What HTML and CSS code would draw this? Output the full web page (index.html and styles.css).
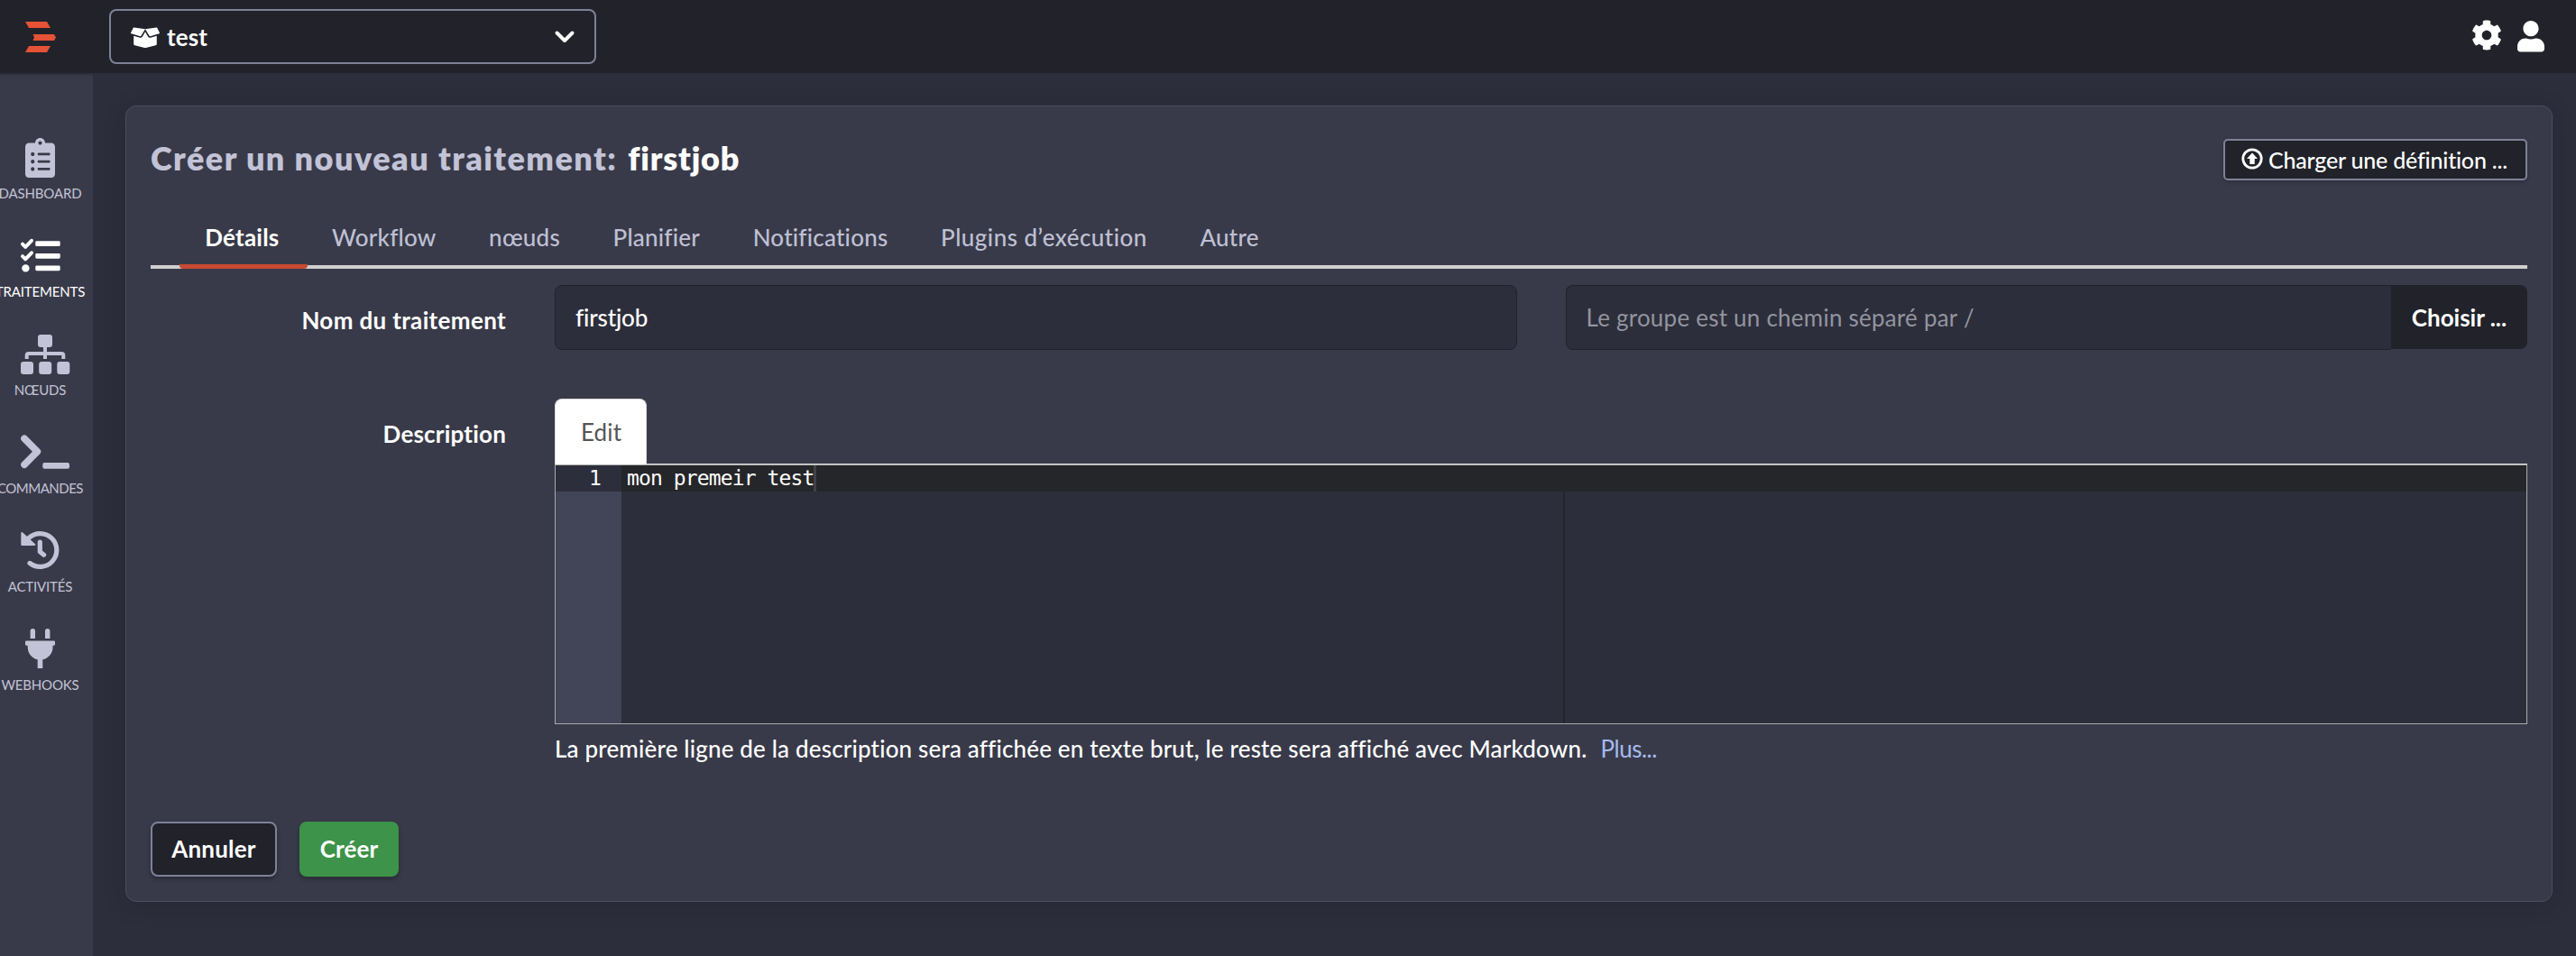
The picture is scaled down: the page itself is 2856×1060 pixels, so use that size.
FILE: index.html
```html
<!DOCTYPE html>
<html lang="fr">
<head>
<meta charset="utf-8">
<title>Créer un nouveau traitement</title>
<link rel="stylesheet" href="styles.css">
</head>
<body>
<header class="topbar">
  <svg class="logo" viewBox="0 0 34 34"><path d="M0 0h24l4 7H4zM8.500 14H32l2 3.500-2 3.500H8.500l1.500-3.500zM4 27h24l-4 7H0z"/></svg>
  <div class="project">
    <svg class="box" viewBox="0 0 640 512"><path d="M425.700 256c-16.900 0-32.800-9-41.400-23.400L320 126l-64.200 106.600c-8.700 14.500-24.600 23.500-41.500 23.500-4.500 0-9-.6-13.300-1.900L64 215v178c0 14.700 10 27.500 24.200 31l216.200 54.100c10.200 2.500 20.900 2.500 31 0L551.800 424c14.200-3.600 24.200-16.400 24.200-31V215l-137 39.100c-4.300 1.300-8.800 1.900-13.300 1.900zm212.600-112.200L586.800 41c-3.100-6.200-9.800-9.800-16.700-8.900L320 64l91.700 152.100c3.800 6.300 11.400 9.300 18.500 7.300l197.900-56.500c9.900-2.900 14.700-13.900 10.200-23.100zM53.200 41L1.700 143.800c-4.600 9.200.3 20.200 10.100 23l197.900 56.500c7.100 2 14.700-1 18.500-7.300L320 64 69.800 32.100c-6.900-.8-13.500 2.700-16.600 8.900z"/></svg>
    <span>test</span>
    <svg class="chevron" viewBox="0 0 22 14"><path d="M2.500 2.500 11 11l8.500-8.500"/></svg>
  </div>
  <div class="tools">
    <svg class="cog" viewBox="0 0 512 512"><path d="M487.400 315.700l-42.600-24.600c4.300-23.200 4.300-47 0-70.200l42.600-24.600c4.900-2.800 7.100-8.600 5.500-14-11.100-35.600-30-67.800-54.700-94.600-3.800-4.100-10-5.100-14.800-2.300L380.800 110c-17.900-15.400-38.500-27.300-60.800-35.100V25.800c0-5.600-3.900-10.500-9.400-11.700-36.700-8.200-74.300-7.800-109.200 0-5.500 1.200-9.400 6.100-9.400 11.700V75c-22.200 7.900-42.800 19.800-60.800 35.100L88.700 85.500c-4.900-2.800-11-1.900-14.800 2.300-24.700 26.700-43.600 58.900-54.700 94.600-1.700 5.400.6 11.200 5.500 14L67.300 221c-4.300 23.200-4.300 47 0 70.200l-42.600 24.600c-4.900 2.800-7.100 8.600-5.500 14 11.100 35.600 30 67.800 54.700 94.600 3.800 4.100 10 5.100 14.800 2.300l42.600-24.600c17.900 15.400 38.500 27.300 60.800 35.100v49.200c0 5.600 3.900 10.500 9.400 11.700 36.700 8.200 74.300 7.800 109.200 0 5.500-1.200 9.400-6.100 9.400-11.700v-49.200c22.200-7.900 42.800-19.800 60.800-35.100l42.600 24.600c4.900 2.800 11 1.900 14.800-2.300 24.700-26.700 43.600-58.900 54.700-94.600 1.500-5.500-.7-11.300-5.600-14.100zM256 336c-44.100 0-80-35.900-80-80s35.900-80 80-80 80 35.900 80 80-35.900 80-80 80z"/></svg>
    <svg class="user" viewBox="0 0 448 512"><path d="M224 256c70.700 0 128-57.300 128-128S294.700 0 224 0 96 57.300 96 128s57.300 128 128 128zm89.600 32h-16.700c-22.200 10.200-46.900 16-72.900 16s-50.600-5.800-72.900-16h-16.700C60.200 288 0 348.200 0 422.400V464c0 26.500 21.500 48 48 48h352c26.500 0 48-21.500 48-48v-41.600c0-74.200-60.200-134.400-134.400-134.400z"/></svg>
  </div>
</header>
<div class="layout">
  <nav class="sidebar">
    <a class="nav-item">
      <svg class="narrow" viewBox="0 0 384 512"><path d="M336 64h-80c0-35.300-28.700-64-64-64s-64 28.700-64 64H48C21.500 64 0 85.500 0 112v352c0 26.500 21.500 48 48 48h288c26.500 0 48-21.500 48-48V112c0-26.500-21.500-48-48-48zM96 424c-13.300 0-24-10.700-24-24s10.700-24 24-24 24 10.700 24 24-10.700 24-24 24zm0-96c-13.300 0-24-10.700-24-24s10.700-24 24-24 24 10.700 24 24-10.700 24-24 24zm0-96c-13.300 0-24-10.700-24-24s10.700-24 24-24 24 10.700 24 24-10.700 24-24 24zm96-192c13.300 0 24 10.700 24 24s-10.700 24-24 24-24-10.700-24-24 10.700-24 24-24zm128 368c0 4.400-3.600 8-8 8H168c-4.400 0-8-3.600-8-8v-16c0-4.400 3.600-8 8-8h144c4.400 0 8 3.600 8 8v16zm0-96c0 4.400-3.600 8-8 8H168c-4.400 0-8-3.600-8-8v-16c0-4.400 3.600-8 8-8h144c4.400 0 8 3.600 8 8v16zm0-96c0 4.400-3.600 8-8 8H168c-4.400 0-8-3.600-8-8v-16c0-4.400 3.600-8 8-8h144c4.400 0 8 3.600 8 8v16z"/></svg>
      <span>DASHBOARD</span>
    </a>
    <a class="nav-item active">
      <svg class="regular" viewBox="0 0 44 44"><rect x="16.300" y="5.300" width="27.400" height="5.800" rx="1.400"/><rect x="16.300" y="18.900" width="27.400" height="5.800" rx="1.400"/><rect x="16.300" y="32.400" width="27.400" height="5.800" rx="1.400"/><circle cx="5.400" cy="35.400" r="4.200"/><path class="line" stroke-width="4" d="m2 8.600 3.200 3.200 6.800-7M2 22.100l3.200 3.200 6.800-7"/></svg>
      <span>TRAITEMENTS</span>
    </a>
    <a class="nav-item">
      <svg class="wide" viewBox="0 0 55 44"><rect x="19" width="16" height="14" rx="3"/><rect y="30" width="14" height="14" rx="3"/><rect x="20.200" y="30" width="14" height="14" rx="3"/><rect x="40.300" y="30" width="14" height="14" rx="3"/><path class="line butt" stroke-width="4" d="M6.700 27v-4q0-2 2-2h36.600q2 0 2 2v4M27 13v14"/></svg>
      <span>NŒUDS</span>
    </a>
    <a class="nav-item">
      <svg class="wide" viewBox="0 0 55 44"><path class="line" stroke-width="7.600" d="m4 6.200 14.400 14.500L4 35.200"/><rect x="24.300" y="33" width="29.700" height="6.800" rx="2"/></svg>
      <span class="tight">COMMANDES</span>
    </a>
    <a class="nav-item">
      <svg class="regular" viewBox="0 0 44 44"><path class="line" stroke-width="5.200" d="M8.800 7.600A18.400 18.400 0 1 1 10 35.400M21.300 12.200v10.600l4.300 3.400"/><path d="M.300 2Q.300.300 2 1.300L16 14.300q.8 1.700-1 1.700H1.500Q.300 16 .300 14.800z"/></svg>
      <span>ACTIVITÉS</span>
    </a>
    <a class="nav-item">
      <svg class="narrow" viewBox="0 0 33 44"><path d="M5.600 10V1.800a2.700 2.700 0 0 1 5.400 0V10zM22 10V1.800a2.700 2.700 0 0 1 5.400 0V10zM1.300 12.500h30.400q1.300 0 1.300 1.300v2.700q0 1.300-1.300 1.300h-1.200V19a14 14 0 0 1-11.200 14.300V43h-5.600v-9.700A14 14 0 0 1 2.700 19v-1.200H1.300Q0 17.800 0 16.500v-2.700q0-1.300 1.300-1.300z"/></svg>
      <span>WEBHOOKS</span>
    </a>
  </nav>
  <main class="content">
    <section class="card">
      <div class="card-head">
        <h1><span class="prefix">Créer un nouveau traitement:</span> <span class="job">firstjob</span></h1>
        <button class="load">
          <svg viewBox="0 0 24 24"><circle cx="12" cy="12" r="10.200"/><path d="M12 5.500 18 12h-3.300v6H9.300v-6H6z"/></svg>
          <span>Charger une définition ...</span>
        </button>
      </div>
      <ul class="tabs">
        <li class="active">Détails</li>
        <li>Workflow</li>
        <li>nœuds</li>
        <li>Planifier</li>
        <li>Notifications</li>
        <li class="plugins">Plugins d’exécution</li>
        <li>Autre</li>
      </ul>
      <div class="form-row">
        <label>Nom du traitement</label>
        <div class="fields">
          <div class="input">firstjob</div>
          <div class="group">
            <div class="input placeholder">Le groupe est un chemin séparé par /</div>
            <button class="choose">Choisir ...</button>
          </div>
        </div>
      </div>
      <div class="form-row description">
        <label>Description</label>
        <div>
          <div class="editor-tabs"><div class="editor-tab">Edit</div></div>
          <div class="editor">
            <div class="gutter"><div class="line-no">1</div></div>
            <div class="code">
              <div class="code-line">mon premeir test<i class="caret"></i></div>
              <div class="print-margin"></div>
            </div>
          </div>
          <p class="help">La première ligne de la description sera affichée en texte brut, le reste sera affiché avec Markdown.<a>Plus...</a></p>
        </div>
      </div>
      <div class="actions">
        <button class="cancel">Annuler</button>
        <button class="create">Créer</button>
      </div>
    </section>
  </main>
</div>
</body>
</html>
```
FILE: styles.css
```css
* { box-sizing: border-box; }
body {
  margin: 0;
  height: 1060px;
  overflow: hidden;
  display: flex;
  flex-direction: column;
  background: #2d2e3b;
  color: #fff;
  font: 500 26px/32px Lato, "Open Sans", sans-serif;
  letter-spacing: .15px;
}
svg { display: block; fill: currentColor; flex: none; overflow: visible; }
button { font: inherit; color: inherit; letter-spacing: inherit; margin: 0; border: 0; }
h1, p, ul { margin: 0; padding: 0; }

/* Top bar */
.topbar {
  height: 81px;
  flex: none;
  display: flex;
  align-items: flex-start;
  background: #21222a;
  padding: 10px 35px 0 28px;
}
.logo { width: 34px; height: 34px; margin: 14px 59px 0 0; color: #e65236; }
.project {
  width: 540px;
  height: 61px;
  border: 2px solid #7e8297;
  border-radius: 8px;
  padding: 13px 22px 0;
  display: flex;
  font-weight: 700;
}
.box { width: 32px; height: 25.600px; margin: 4px 8px 0 0; }
.chevron { width: 22px; height: 14px; margin: 8.500px 0 0 auto; }
.chevron path { fill: none; stroke: currentColor; stroke-width: 4; stroke-linecap: round; stroke-linejoin: round; }
.tools { margin: 12px 0 0 auto; display: flex; gap: 17px; }
.cog { width: 34px; height: 34px; }
.user { width: 30px; height: 34.500px; margin-top: 1px; }

/* Sidebar */
.layout { flex: 1; display: flex; min-height: 0; }
.sidebar {
  width: 103px;
  flex: none;
  margin-top: 2px;
  background: #393a49;
  padding: 70px 14px 0 0;
  color: #c2c3d6;
}
.nav-item { display: flex; flex-direction: column; height: 109px; font-size: 15px; line-height: 18px; font-weight: 400; letter-spacing: -.15px; }
.nav-item svg { height: 44px; margin-bottom: 8px; }
.nav-item span { align-self: center; margin: 0 -20px; white-space: nowrap; }
.nav-item .tight { letter-spacing: -.5px; }
.nav-item.active { color: #fff; }
.narrow { width: 33px; margin-left: 28px; }
.regular { width: 44px; margin-left: 23px; }
.wide { width: 55px; margin-left: 23px; }
.line { fill: none; stroke: currentColor; stroke-linecap: round; stroke-linejoin: round; }
.butt { stroke-linecap: butt; }

/* Card */
.content { flex: 1; padding: 36px 26px 0 36px; }
.card {
  height: 883px;
  border: 1px solid #4b4d61;
  border-radius: 12px;
  background: #393a49;
  box-shadow: 0 4px 24px rgba(20, 20, 28, .2);
  padding: 36px 27px 0;
}
.card-head { display: flex; justify-content: space-between; align-items: flex-start; height: 46px; }
h1 { display: flex; gap: 12px; font-size: 36px; line-height: 43px; font-weight: 800; }
.prefix { color: #c2c3d6; letter-spacing: 1.460px; }
.job { letter-spacing: .8px; }
.load {
  width: 337px;
  height: 46px;
  display: flex;
  padding: 5px 0 0 18px;
  background: #21222a;
  border: 2px solid #7e8297;
  border-radius: 5px;
  box-shadow: 0 2px 4px rgba(0, 0, 0, .2);
  font-size: 25px;
  letter-spacing: -.2px;
}
.load svg { width: 24px; height: 24px; margin: 3px 6px 0 0; }
.load circle { fill: none; stroke: currentColor; stroke-width: 2.800; }

/* Tabs */
.tabs {
  display: flex;
  height: 51px;
  margin-top: 47px;
  padding-left: 32px;
  border-bottom: 4px solid #cfcfcf;
  color: #bfc0d4;
  list-style: none;
}
.tabs li { position: relative; padding: 0 29.300px; white-space: nowrap; letter-spacing: .22px; }
.tabs .plugins { letter-spacing: .46px; }
.tabs .active { color: #fff; font-weight: 700; padding-left: 28.300px; letter-spacing: .2px; }
.tabs .active::after {
  content: "";
  position: absolute;
  left: 0;
  right: -2px;
  top: 46px;
  height: 5px;
  background: #c94a31;
  border-radius: 0 0 4px 4px;
}

/* Form */
.form-row { display: grid; grid-template-columns: 394px 1fr; gap: 54px; margin-top: 18px; }
.form-row label { text-align: right; font-weight: 700; padding-top: 23px; letter-spacing: .35px; }
.form-row.description label { letter-spacing: .2px; }
.fields { display: grid; grid-template-columns: 1fr 1fr; gap: 54px; }
.input {
  height: 72px;
  flex: 1;
  padding: 18.500px 22px;
  background: #2d2e3b;
  border: 1px solid #21222a;
  border-radius: 8px;
}
.fields > .input { letter-spacing: -.15px; }
.placeholder { color: #92949f; font-weight: 400; border-right: 0; border-radius: 8px 0 0 8px; letter-spacing: .23px; }
.group { display: flex; }
.choose { width: 151px; height: 71px; background: #21222a; border-radius: 0 8px 8px 0; font-weight: 700; padding: 0; letter-spacing: 0; }
.description { margin-top: 54px; }
.editor-tabs { display: flex; height: 73px; border-bottom: 1px solid #ddd; }
.editor-tab {
  width: 102px;
  height: 73px;
  padding: 20px 0 0 28px;
  background: #fff;
  color: #555;
  font-weight: 400;
  border: 1px solid #ddd;
  border-bottom: 0;
  border-radius: 8px 8px 0 0;
}
.editor {
  height: 288px;
  display: flex;
  border: 1px solid #aaa;
  background: #2d2e3b;
  font: 23px/29px "DejaVu Sans Mono", monospace;
  letter-spacing: -.880px;
}
.gutter { width: 73px; background: #424458; }
.line-no { height: 29px; padding-right: 23px; text-align: right; background: #2d2e3b; }
.code { flex: 1; position: relative; }
.code-line { display: flex; height: 29px; padding-left: 6px; background: #252629; white-space: pre; }
.caret { width: 3px; height: 29px; background: #404144; }
.print-margin { position: absolute; left: 1044px; top: 29px; bottom: 0; width: 2px; background: #24252b; }
.help { margin-top: 11px; letter-spacing: .165px; white-space: nowrap; }
.help a { color: #a3bbef; margin-left: 15px; font-weight: 400; letter-spacing: -.5px; }

/* Actions */
.actions { display: flex; gap: 25px; margin-top: 65px; font-weight: 700; }
.actions button { height: 61px; padding: 0 0 1px; border-radius: 8px; box-shadow: 0 3px 5px rgba(0, 0, 0, .25); }
.actions .cancel { width: 140px; background: #21222a; border: 2px solid #7e8297; letter-spacing: .2px; }
.actions .create { width: 110px; background: #3d9349; }
```
